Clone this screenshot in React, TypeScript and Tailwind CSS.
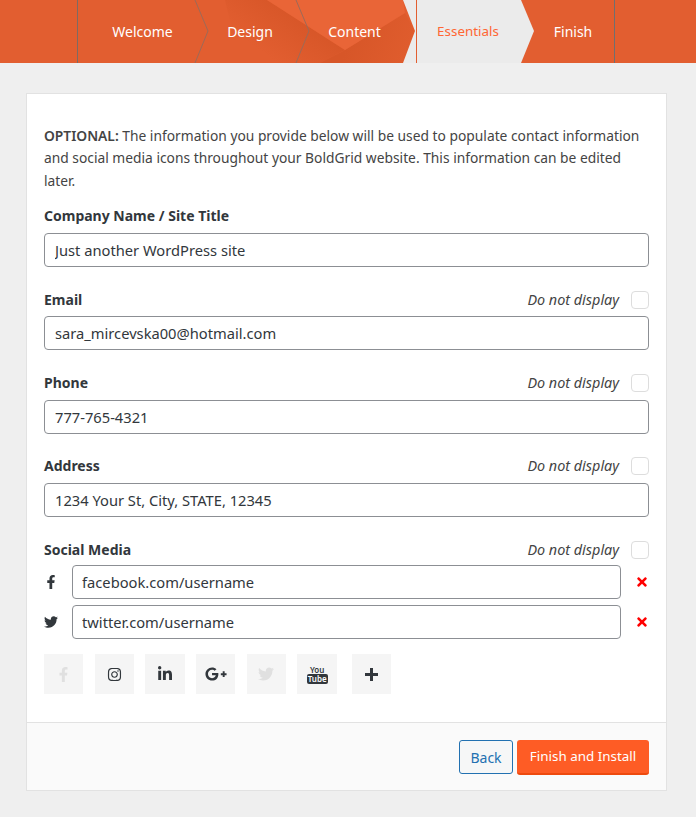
import React from "react";
import { FaFacebookF, FaTwitter, FaInstagram, FaLinkedinIn, FaGooglePlusG, FaTimes } from "react-icons/fa";

const FONT = "font-['Noto_Sans','Open_Sans',sans-serif]";

function HeaderArt() {
  return (
    <svg className="absolute inset-0" width="696" height="63" viewBox="0 0 696 63">
      <defs>
        <linearGradient id="facet" gradientUnits="userSpaceOnUse" x1="262" y1="52" x2="292" y2="10">
          <stop offset="0" stopColor="#e25e30" />
          <stop offset="1" stopColor="#d75628" />
        </linearGradient>
        <linearGradient id="facet2" gradientUnits="userSpaceOnUse" x1="345" y1="50" x2="400" y2="70">
          <stop offset="0" stopColor="#d75628" />
          <stop offset="1" stopColor="#df5c2d" />
        </linearGradient>
      </defs>
      <polygon points="225,0 267,0 345,50 320,63 240,63" fill="url(#facet)" />
      <polygon points="345,50 405,13 415,31 403,63 320,63" fill="url(#facet2)" />
      <polygon points="267,0 403,0 405,13 345,50" fill="#e96537" />
      <polyline points="195,0 208,31 195,63" fill="none" stroke="#9c6a58" strokeWidth="1" />
      <polyline points="296,0 309,31 296,63" fill="none" stroke="#9c6a58" strokeWidth="1" />
      <line x1="77.5" y1="0" x2="77.5" y2="63" stroke="#7f6a62" />
      <line x1="614.5" y1="0" x2="614.5" y2="63" stroke="#6f6f70" />
      <polygon points="403,0 417,0 417,63 403,63 415,31" fill="#ebebeb" />
      <line x1="416.5" y1="0" x2="416.5" y2="63" stroke="#e25e30" />
      <polygon points="417,0 521,0 534,31 521,63 417,63" fill="#ebebeb" />
    </svg>
  );
}

function Field({
  label,
  value,
  hide = false,
}: {
  label: string;
  value: string;
  hide?: boolean;
}) {
  return (
    <div className="mb-[23.3px]">
      <LabelRow label={label} hide={hide} />
      <input
        readOnly
        value={value}
        className="mt-[7px] block w-full h-[34px] border border-[#8c8f94] rounded-[4px] px-[10px] text-[14.7px] text-[#32373c] bg-white outline-none"
      />
    </div>
  );
}

function LabelRow({ label, hide }: { label: string; hide?: boolean }) {
  return (
    <div className="flex items-center justify-between h-[19px]">
      <span className="font-bold text-[#32373c] text-[14px]">{label}</span>
      {hide && (
        <span className="flex items-center">
          <span className="italic text-[14.4px] text-[#444]">Do not display</span>
          <span className="ml-[12px] w-[18px] h-[18px] border border-[#ddd] rounded-[4px] bg-white" />
        </span>
      )}
    </div>
  );
}

function SocialRow({ icon, value }: { icon: React.ReactNode; value: string }) {
  return (
    <div className="flex items-center mt-[5.7px]">
      <span className="w-[28px] text-[#32373c] flex items-center">{icon}</span>
      <input
        readOnly
        value={value}
        className="flex-1 min-w-0 h-[34px] border border-[#8c8f94] rounded-[4px] px-[9px] pt-[1px] text-[14.7px] text-[#32373c] bg-white outline-none"
      />
      <FaTimes className="ml-[14px] mr-0 text-[#ff0000]" size={14} />
    </div>
  );
}

function Tile({ children, className = "" }: { children: React.ReactNode; className?: string }) {
  return (
    <div className={`w-[39.4px] h-[40px] bg-[#f5f5f5] flex items-center justify-center text-[#32373c] ${className}`}>
      {children}
    </div>
  );
}

export default function App() {
  return (
    <div className={`min-h-[817px] bg-[#efefef] overflow-hidden ${FONT}`}>
      <header className="relative h-[63px] bg-[#e25e30] overflow-hidden">
        <HeaderArt />
        <nav className="relative flex h-full items-center text-[14px]">
          <div className="w-[78px]" />
          <span className="w-[129px] text-center text-white">Welcome</span>
          <span className="w-[86px] text-center text-white">Design</span>
          <span className="w-[123px] text-center text-white">Content</span>
          <span className="ml-[1px] w-[102px] text-center text-[13.4px] text-[#ff6633]">Essentials</span>
          <span className="ml-[13px] w-[82px] text-center text-white">Finish</span>
        </nav>
      </header>

      <main className="mx-[26px] mt-[30px] w-[641px] border border-[#e2e2e2] bg-white">
        <div className="px-[17px] pt-[31px] pb-[27.7px] text-[13.8px] text-[#444] leading-[22.4px]">
          <p className="mb-[14.8px]">
            <strong className="font-semibold">OPTIONAL:</strong> The information you provide below will be used to populate contact information and social media icons throughout your BoldGrid website. This information can be edited later.
          </p>
          <Field label="Company Name / Site Title" value="Just another WordPress site" />
          <Field label="Email" value="sara_mircevska00@hotmail.com" hide />
          <Field label="Phone" value="777-765-4321" hide />
          <Field label="Address" value="1234 Your St, City, STATE, 12345" hide />
          <LabelRow label="Social Media" hide />
          <SocialRow icon={<FaFacebookF size={14} />} value="facebook.com/username" />
          <SocialRow icon={<FaTwitter size={14} />} value="twitter.com/username" />
          <div className="flex mt-[15.5px] gap-[11.3px]">
            <Tile><FaFacebookF size={15} className="text-[#e0e0e0]" /></Tile>
            <Tile><FaInstagram size={15} /></Tile>
            <Tile><FaLinkedinIn size={16} /></Tile>
            <Tile><FaGooglePlusG size={22} /></Tile>
            <Tile><FaTwitter size={16} className="text-[#e0e0e0]" /></Tile>
            <Tile>
              <span className="flex flex-col items-center text-[#32373c] font-semibold">
                <span className="text-[8px] leading-[9px]">You</span>
                <span className="text-[8px] leading-[10px] bg-[#32373c] text-white rounded-[2px] px-[1px]">Tube</span>
              </span>
            </Tile>
            <Tile className="ml-[3.8px]">
              <svg width="13" height="13" viewBox="0 0 13 13" fill="currentColor">
                <path d="M5 0h3v5h5v3H8v5H5V8H0V5h5z" />
              </svg>
            </Tile>
          </div>
        </div>
        <footer className="h-[68px] pt-[2px] border-t border-[#e2e2e2] bg-[#fafafa] flex items-center justify-end pr-[17px] gap-[4px]">
          <button className="h-[34px] w-[54px] border border-[#2271b1] rounded-[3px] bg-[#f6f7f7] text-[#2271b1] text-[14px]">Back</button>
          <button className="h-[35px] w-[132px] rounded-[3px] bg-[#fe5c25] border-b-2 border-[#ee4a0e] text-white text-[13.4px]">Finish and Install</button>
        </footer>
      </main>
    </div>
  );
}
